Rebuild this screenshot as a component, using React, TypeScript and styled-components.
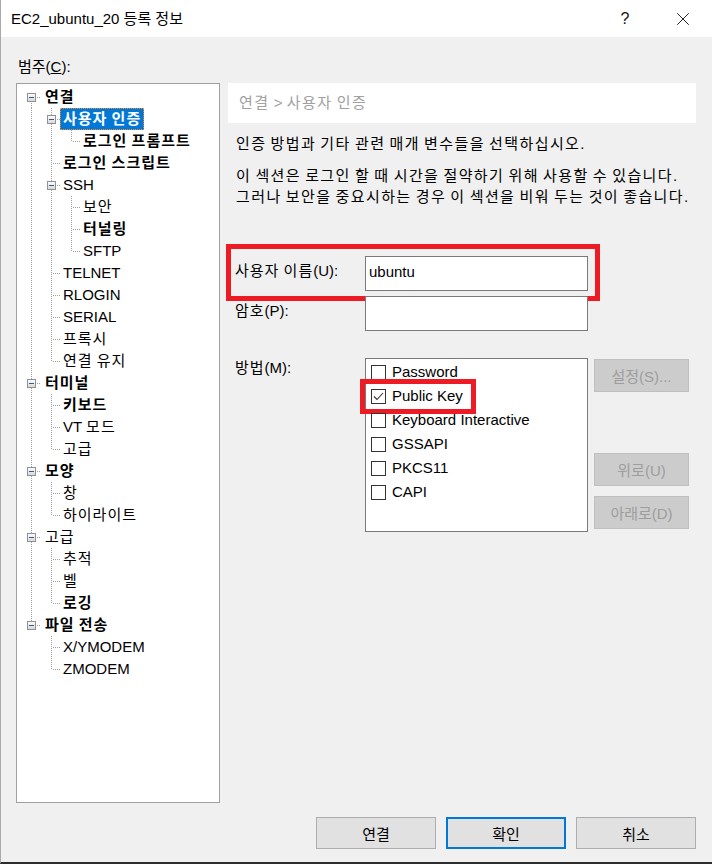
import React from 'react';
import styled, { createGlobalStyle } from 'styled-components';
import { X } from 'lucide-react';

const GlobalStyle = createGlobalStyle`
  html, body {
    margin: 0;
    padding: 0;
    background: #f0f0f0;
  }
  body {
    font-family: "Liberation Sans", "Noto Sans CJK KR", sans-serif;
    font-size: 15px;
    color: #000;
  }
  * {
    box-sizing: border-box;
  }
`;

type TreeNode = {
  label: string;
  level: number;
  bold?: boolean;
  open?: boolean;
  selected?: boolean;
};

const tree: TreeNode[] = [
  { label: '연결', level: 0, bold: true, open: true },
  { label: '사용자 인증', level: 1, bold: true, open: true, selected: true },
  { label: '로그인 프롬프트', level: 2, bold: true },
  { label: '로그인 스크립트', level: 1, bold: true },
  { label: 'SSH', level: 1, open: true },
  { label: '보안', level: 2 },
  { label: '터널링', level: 2, bold: true },
  { label: 'SFTP', level: 2 },
  { label: 'TELNET', level: 1 },
  { label: 'RLOGIN', level: 1 },
  { label: 'SERIAL', level: 1 },
  { label: '프록시', level: 1 },
  { label: '연결 유지', level: 1 },
  { label: '터미널', level: 0, bold: true, open: true },
  { label: '키보드', level: 1, bold: true },
  { label: 'VT 모드', level: 1 },
  { label: '고급', level: 1 },
  { label: '모양', level: 0, bold: true, open: true },
  { label: '창', level: 1 },
  { label: '하이라이트', level: 1 },
  { label: '고급', level: 0, open: true },
  { label: '추적', level: 1 },
  { label: '벨', level: 1 },
  { label: '로깅', level: 1, bold: true },
  { label: '파일 전송', level: 0, bold: true, open: true },
  { label: 'X/YMODEM', level: 1 },
  { label: 'ZMODEM', level: 1 },
];

const methods = [
  { label: 'Password', checked: false },
  { label: 'Public Key', checked: true, marked: true },
  { label: 'Keyboard Interactive', checked: false },
  { label: 'GSSAPI', checked: false },
  { label: 'PKCS11', checked: false },
  { label: 'CAPI', checked: false },
];

// x of the connector line per level, and width of the gutter before the label
const LINE_X = [14, 34, 54];
const GUTTER = [25, 43, 63];
const ROW_H = 22;

const hasNextSibling = (i: number) => {
  const lvl = tree[i].level;
  for (let j = i + 1; j < tree.length; j++) {
    if (tree[j].level < lvl) return false;
    if (tree[j].level === lvl) return true;
  }
  return false;
};

const ancestorAt = (i: number, k: number) => {
  for (let j = i - 1; j >= 0; j--) if (tree[j].level === k) return j;
  return -1;
};

// the dialog's hangul is wider than Noto's, so hangul runs get a little spacing
const Wide = styled.span`
  letter-spacing: var(--ko-spacing, 1px);
`;

const HANGUL = /([\u3131-\uD7A3]+)/;

const Ko = ({ text }: { text: string }) => (
  <>{text.split(HANGUL).map((part, i) => (i % 2 ? <Wide key={i}>{part}</Wide> : part))}</>
);

const Window = styled.div`
  width: 712px;
  height: 864px;
  display: flex;
  flex-direction: column;
  background: #f0f0f0;
  border-left: 1px solid #a9a9a9;
  border-bottom: 2px solid #2d2d2d;
`;

const TitleBar = styled.div`
  height: 37px;
  display: flex;
  align-items: center;
  background: #fff;
  padding-left: 10px;
`;

const TitleText = styled.div`
  flex: 1;
  font-size: 15px;
  line-height: 20px;
`;

const CaptionButton = styled.div`
  width: 58px;
  height: 37px;
  display: flex;
  align-items: center;
  justify-content: center;
  font-size: 16px;
  color: #111;
`;

const Body = styled.div`
  flex: 1;
  display: flex;
  flex-direction: column;
  padding: 20px 16px 0 15px;
`;

const CategoryLabel = styled.div`
  line-height: 20px;
  padding-left: 2px;
  margin-bottom: 6px;
`;

const Main = styled.div`
  display: flex;
  gap: 8px;
  height: 720px;
`;

const TreeBox = styled.div`
  width: 204px;
  height: 100%;
  background: #fff;
  border: 1px solid #a0a0a0;
  padding-top: 2px;
  overflow: hidden;
`;

const TreeRow = styled.div`
  display: flex;
  align-items: center;
  height: ${ROW_H}px;
`;

const TreeLabel = styled.span<{ $bold?: boolean; $selected?: boolean }>`
  height: 22px;
  line-height: 20px;
  padding: 0 2px;
  white-space: nowrap;
  font-weight: ${({ $bold }) => ($bold ? 700 : 400)};
  background: ${({ $selected }) => ($selected ? '#0078d7' : 'transparent')};
  color: ${({ $selected }) => ($selected ? '#fff' : '#000')};
  border: 1px dotted ${({ $selected }) => ($selected ? '#ff8728' : 'transparent')};
`;

const Panel = styled.div`
  flex: 1;
  display: flex;
  flex-direction: column;
`;

const PanelHeader = styled.div`
  --ko-spacing: 1.5px;
  height: 40px;
  line-height: 40px;
  background: #fff;
  padding-left: 11px;
  color: #a0a0a0;
`;

const Para = styled.div<{ $gap: number }>`
  --ko-spacing: 1.4px;
  margin-top: ${({ $gap }) => $gap}px;
  padding-left: 8px;
  line-height: 21px;
`;

const FieldRow = styled.div<{ $gap: number }>`
  position: relative;
  display: flex;
  align-items: flex-start;
  margin-top: ${({ $gap }) => $gap}px;
`;

const Marked = styled.div`
  position: absolute;
  inset: -12px 96px -10px -2px;
  border: 5px solid #ed1c24;
  pointer-events: none;
`;

const FieldLabel = styled.div<{ $pad?: number }>`
  width: 137px;
  padding-left: 7px;
  padding-top: ${({ $pad }) => $pad ?? 0}px;
  line-height: 20px;
`;

const TextBox = styled.input`
  width: 223px;
  height: 35px;
  border: 1px solid #7a7a7a;
  background: #fff;
  padding: 0 0 5px 3px;
  font: inherit;
  color: #000;
  outline: none;
`;

const ListBox = styled.div`
  width: 223px;
  height: 174px;
  border: 1px solid #7a7a7a;
  background: #fff;
  padding: 1px 0 0 5px;
`;

const CheckItem = styled.div`
  position: relative;
  display: flex;
  align-items: center;
  gap: 6px;
  height: 24px;
  line-height: 20px;
`;

const ItemMark = styled.div`
  position: absolute;
  inset: -5px 111px -6px -11px;
  border: 5px solid #ed1c24;
  pointer-events: none;
`;

const Box = styled.span`
  width: 15px;
  height: 15px;
  border: 1px solid #333;
  background: #fff;
  display: flex;
`;

const SideButtons = styled.div`
  display: flex;
  flex-direction: column;
  margin-left: 6px;
`;

const SideButton = styled.div<{ $gap: number }>`
  width: 95px;
  height: 33px;
  margin-top: ${({ $gap }) => $gap}px;
  background: #cccccc;
  border: 1px solid #bfbfbf;
  color: #9d9d9d;
  display: flex;
  align-items: center;
  justify-content: center;
`;

const Footer = styled.div`
  display: flex;
  justify-content: flex-end;
  gap: 10px;
  margin-top: 14px;
`;

const DialogButton = styled.div<{ $default?: boolean }>`
  width: 120px;
  height: 32px;
  background: #e1e1e1;
  border: ${({ $default }) => ($default ? '2px solid #0078d7' : '1px solid #adadad')};
  display: flex;
  align-items: center;
  justify-content: center;
`;

const Connector = ({ index }: { index: number }) => {
  const node = tree[index];
  const lvl = node.level;
  const lx = LINE_X[lvl];
  const dot = { stroke: '#a0a0a0', strokeWidth: 1, strokeDasharray: '1 1' };
  const parts: React.ReactNode[] = [];

  for (let k = 0; k < lvl; k++) {
    const a = ancestorAt(index, k);
    if (a >= 0 && hasNextSibling(a)) {
      parts.push(<line key={'a' + k} x1={LINE_X[k] + 0.5} y1={0} x2={LINE_X[k] + 0.5} y2={ROW_H} {...dot} />);
    }
  }
  const next = hasNextSibling(index);
  parts.push(
    <line key="v" x1={lx + 0.5} y1={index === 0 ? 11 : 0} x2={lx + 0.5} y2={next ? ROW_H : 11} {...dot} />
  );
  parts.push(<line key="h" x1={lx + 2} y1={11.5} x2={lx + 10} y2={11.5} {...dot} />);
  if (node.open) {
    parts.push(
      <g key="box">
        <defs>
          <linearGradient id={'g' + index} x1="0" y1="0" x2="0" y2="1">
            <stop offset="0" stopColor="#ffffff" />
            <stop offset="1" stopColor="#d6d6d6" />
          </linearGradient>
        </defs>
        <rect x={lx - 4 + 0.5} y={7.5} width={8} height={8} fill={`url(#g${index})`} stroke="#919191" />
        <line x1={lx - 2} y1={11.5} x2={lx + 3} y2={11.5} stroke="#3c5a88" strokeWidth={1} />
      </g>
    );
  }
  return (
    <svg width={GUTTER[lvl]} height={ROW_H} style={{ flex: 'none' }}>
      {parts}
    </svg>
  );
};

export default function App() {
  return (
    <>
      <GlobalStyle />
      <Window>
        <TitleBar>
          <TitleText>EC2_ubuntu_20 등록 정보</TitleText>
          <CaptionButton>?</CaptionButton>
          <CaptionButton>
            <X size={22} strokeWidth={1} color="#111" />
          </CaptionButton>
        </TitleBar>
        <Body>
          <CategoryLabel>
            범주(<u>C</u>):
          </CategoryLabel>
          <Main>
            <TreeBox>
              {tree.map((node, i) => (
                <TreeRow key={i}>
                  <Connector index={i} />
                  <TreeLabel $bold={node.bold} $selected={node.selected}>
                    <Ko text={node.label} />
                  </TreeLabel>
                </TreeRow>
              ))}
            </TreeBox>
            <Panel>
              <PanelHeader>
                <Ko text="연결 > 사용자 인증" />
              </PanelHeader>
              <Para $gap={10}>
                <Ko text="인증 방법과 기타 관련 매개 변수들을 선택하십시오." />
              </Para>
              <Para $gap={11}>
                <Ko text="이 섹션은 로그인 할 때 시간을 절약하기 위해 사용할 수 있습니다." />
                <br />
                <Ko text="그러나 보안을 중요시하는 경우 이 섹션을 비워 두는 것이 좋습니다." />
              </Para>
              <FieldRow $gap={49}>
                <FieldLabel $pad={5}>
                  <Ko text="사용자 이름(U):" />
                </FieldLabel>
                <TextBox readOnly value="ubuntu" />
                <Marked />
              </FieldRow>
              <FieldRow $gap={5}>
                <FieldLabel $pad={5}>
                  <Ko text="암호(P):" />
                </FieldLabel>
                <TextBox readOnly type="password" value="" />
              </FieldRow>
              <FieldRow $gap={27}>
                <FieldLabel>
                  <Ko text="방법(M):" />
                </FieldLabel>
                <ListBox>
                  {methods.map((m) => (
                    <CheckItem key={m.label}>
                      <Box>
                        {m.checked && (
                          <svg width="13" height="13" viewBox="0 0 13 13">
                            <polyline points="2,6.5 5,9.5 11,3" fill="none" stroke="#333" strokeWidth="1.1" />
                          </svg>
                        )}
                      </Box>
                      {m.label}
                      {m.marked && <ItemMark />}
                    </CheckItem>
                  ))}
                </ListBox>
                <SideButtons>
                  <SideButton $gap={1}>설정(S)...</SideButton>
                  <SideButton $gap={61}>위로(U)</SideButton>
                  <SideButton $gap={10}>아래로(D)</SideButton>
                </SideButtons>
              </FieldRow>
            </Panel>
          </Main>
          <Footer>
            <DialogButton>연결</DialogButton>
            <DialogButton $default>확인</DialogButton>
            <DialogButton>취소</DialogButton>
          </Footer>
        </Body>
      </Window>
    </>
  );
}
